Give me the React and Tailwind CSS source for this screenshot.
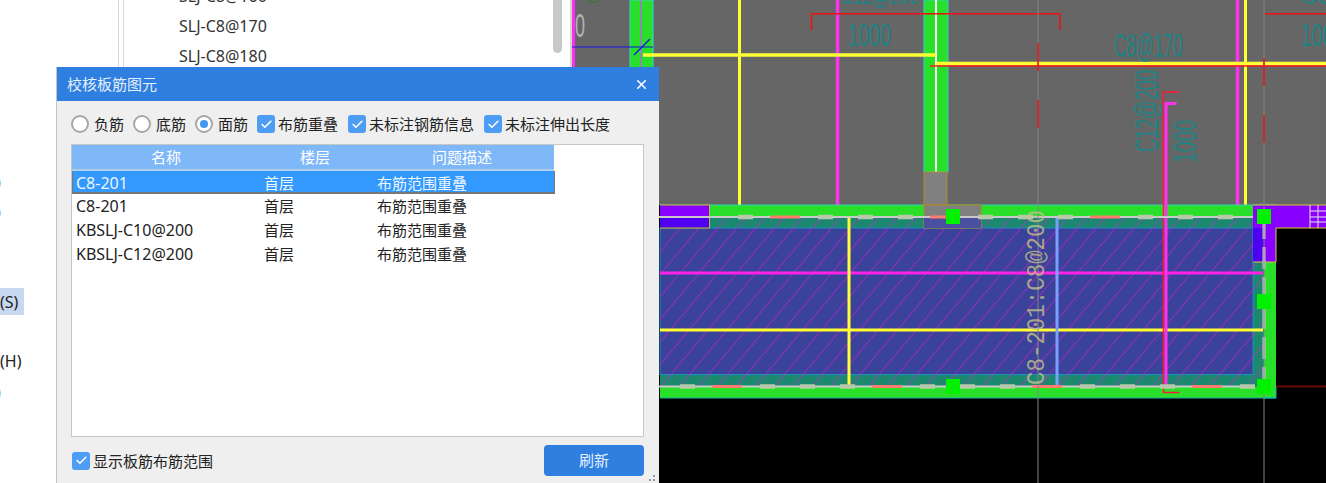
import { X, Check } from 'lucide-react';

const FONT = "font-['Noto_Sans','Noto_Sans_CJK_SC',sans-serif]";

const rows = [
  { name: 'C8-201', floor: '首层', issue: '布筋范围重叠', selected: true },
  { name: 'C8-201', floor: '首层', issue: '布筋范围重叠' },
  { name: 'KBSLJ-C10@200', floor: '首层', issue: '布筋范围重叠' },
  { name: 'KBSLJ-C12@200', floor: '首层', issue: '布筋范围重叠' },
];

const markers = [[953, 216], [1264, 216], [1264, 301], [953, 386], [1264, 386]];

function Radio({ label, checked }) {
  return (
    <label className="flex items-center gap-[5px] text-[15px] leading-[18px] text-[#222]">
      <span className="flex h-[18px] w-[18px] items-center justify-center rounded-full border-2 border-[#a8a8a8] bg-white">
        {checked && <span className="h-[8px] w-[8px] rounded-full bg-[#3f97f5]" />}
      </span>
      <span className="whitespace-nowrap">{label}</span>
    </label>
  );
}

function Checkbox({ label }) {
  return (
    <label className="flex items-center gap-[3px] text-[15px] leading-[18px] text-[#222]">
      <span className="flex h-[18px] w-[18px] items-center justify-center rounded-[3px] bg-[#4d9df5]">
        <Check size={13} strokeWidth={3} className="text-white" />
      </span>
      <span className="whitespace-nowrap">{label}</span>
    </label>
  );
}

function DashedLine({ y, from, to }) {
  const xs = [];
  for (let x = from; x < to; x += 40) xs.push(x);
  return (
    <g>
      <line x1={from - 80} y1={y} x2={to} y2={y} stroke="#c9c9c9" strokeWidth="2" />
      {xs.map((x, i) =>
        i % 4 === 1 ? (
          <line key={x} x1={x - 8} y1={y} x2={x + 22} y2={y} stroke="#ff7b6e" strokeWidth="3" />
        ) : (
          <line key={x} x1={x} y1={y} x2={x + 15} y2={y} stroke="#b9c8aa" strokeWidth="4.5" />
        )
      )}
    </g>
  );
}

function CadText({ x, y, len, h, rotate, mono, fill = '#0b8a8c', children }) {
  // 文字拉成 CAD 的细长字形
  const sy = h / 14;
  const tf = rotate
    ? `translate(${x} ${y}) rotate(-90) scale(1 ${sy})`
    : `translate(${x} ${y}) scale(1 ${sy})`;
  return (
    <text
      transform={tf}
      textLength={len}
      lengthAdjust="spacingAndGlyphs"
      fontFamily={mono ? 'Liberation Mono, monospace' : 'Liberation Sans, sans-serif'}
      fontSize="19"
      fill={fill}
      fillOpacity="0.8"
    >
      {children}
    </text>
  );
}

function CadView() {
  return (
    <svg className="block h-[483px] w-[756px]" viewBox="570 0 756 483">
      <defs>
        <pattern id="hatch" width="14.5" height="14.5" patternUnits="userSpaceOnUse" patternTransform="rotate(40)">
          <line x1="0" y1="0" x2="0" y2="14.5" stroke="#d41cdc" strokeWidth="1.2" />
        </pattern>
      </defs>
      <rect x="570" y="0" width="756" height="483" fill="#000" />
      <rect x="572" y="0" width="754" height="205" fill="#666" />
      <rect x="566" y="0" width="6" height="70" fill="#d4d4d4" />
      <rect x="572" y="0" width="3" height="70" fill="#ff2ff0" />

      {/* 上部墙 */}
      <rect x="630" y="0" width="23" height="70" fill="#2adf2a" stroke="#28e0d0" />
      <rect x="924" y="0" width="24" height="172" fill="#2adf2a" stroke="#28d8d0" />
      <line x1="936" y1="0" x2="936" y2="172" stroke="#f4fff4" strokeWidth="2" />
      <line x1="641" y1="0" x2="641" y2="70" stroke="#8a8ab0" strokeWidth="2" />

      <line x1="739.5" y1="0" x2="739.5" y2="217" stroke="#ffff33" strokeWidth="3" />
      <line x1="837.5" y1="0" x2="837.5" y2="217" stroke="#ff33ee" strokeWidth="3.5" />
      <line x1="1237.5" y1="0" x2="1237.5" y2="217" stroke="#ff33ee" strokeWidth="3.5" />
      <line x1="1245.5" y1="0" x2="1245.5" y2="217" stroke="#ffff33" strokeWidth="3" />
      <line x1="643" y1="55" x2="936" y2="55" stroke="#ffff33" strokeWidth="3.5" />
      <line x1="936" y1="63.5" x2="1326" y2="63.5" stroke="#ffff33" strokeWidth="3.5" />
      <line x1="930" y1="66" x2="1326" y2="66" stroke="#ff1a1a" strokeWidth="1.5" />

      <path d="M585 -2l5 4h6l5-4" fill="none" stroke="#1f7a2a" strokeWidth="1" />
      <line x1="572" y1="47" x2="653" y2="47" stroke="#1414e0" strokeWidth="1.2" />
      <line x1="634" y1="55" x2="650" y2="39" stroke="#1414e0" strokeWidth="1.2" />

      {/* 红色支座线 */}
      <path d="M811.5 30V13.7H1060V30" fill="none" stroke="#f01010" strokeWidth="1.5" />
      <path d="M1265 13.7H1326" fill="none" stroke="#f01010" strokeWidth="1.5" />

      <CadText x={848} y={46} len={43} h={23}>1000</CadText>
      <CadText x={1301} y={46} len={43} h={23}>1000</CadText>
      <CadText x={1114} y={57} len={69} h={24}>C8@170</CadText>
      <CadText x={840} y={4} len={79} h={20}>C12@200</CadText>
      <CadText x={1301} y={4} len={30} h={20}>C8</CadText>
      <CadText x={1158} y={152} len={82} h={24} rotate>C12@200</CadText>
      <CadText x={1196} y={163} len={43} h={23} rotate>1000</CadText>
      <CadText x={575} y={37} len={10} h={24} fill="#c8c8c8">0</CadText>

      {/* 板底部 */}
      <rect x="660" y="205" width="616" height="193" fill="#2adf2a" />
      <rect x="660" y="217" width="604" height="170" fill="#1d8870" />
      <rect x="660" y="228" width="593" height="146.5" fill="#3a4299" stroke="#1a8fc0" />
      <rect x="660" y="217" width="604" height="170" fill="url(#hatch)" />
      <line x1="660" y1="205" x2="1276" y2="205" stroke="#28d8b0" strokeWidth="1" />
      <line x1="660" y1="398" x2="1276" y2="398" stroke="#14b0a0" strokeWidth="1.2" />

      {/* 左侧和右上紫色块 */}
      <rect x="660" y="205" width="49" height="12" fill="#8a00ff" />
      <rect x="660" y="217" width="49" height="11" fill="#5000f0" />
      <path d="M660 205H709.5V228H660" fill="none" stroke="#c8b830" strokeWidth="1" />
      <rect x="1253" y="205" width="73" height="23" fill="#8a00ff" />
      <rect x="1253" y="228" width="23" height="34" fill="#8a00ff" />
      <rect x="1253" y="228" width="11" height="34" fill="#5000f0" />
      <path d="M1253 262H1276V228H1326M1253 205H1326" fill="none" stroke="#d8c830" strokeWidth="1" />
      <path d="M1310 205V228M1318 205V228M1310 211H1326M1310 217H1326M1310 222H1326" stroke="#e8e8e8" strokeWidth="1" />

      {/* 柱头 */}
      <rect x="924" y="172" width="23" height="33" fill="#808080" stroke="#b08a1e" />
      <path d="M924 205H981V228H924Z" fill="#808080" stroke="#b08a1e" />
      <rect x="924" y="217" width="57" height="11" fill="#4a4fa0" />

      {/* 钢筋 */}
      <line x1="660" y1="273" x2="1263" y2="273" stroke="#ff22e8" strokeWidth="3" />
      <line x1="660" y1="330" x2="1263" y2="330" stroke="#ffff33" strokeWidth="3" />
      <line x1="849" y1="217" x2="849" y2="386" stroke="#ffff33" strokeWidth="3" />
      <line x1="1057" y1="217" x2="1057" y2="387" stroke="#7aa0ff" strokeWidth="3" />
      <path d="M1179.5 92H1163.5V392.5H1179.5" fill="none" stroke="#ff1a3a" strokeWidth="1.5" />
      <path d="M1176.5 103.5H1166V386" fill="none" stroke="#ff33ee" strokeWidth="3" />

      <DashedLine y={217} from={738} to={1253} />
      <DashedLine y={386.5} from={680} to={1255} />
      <line x1="660" y1="217" x2="709" y2="217" stroke="#c9c9c9" strokeWidth="2" />
      <line x1="1264" y1="217" x2="1264" y2="386" stroke="#c9c9c9" strokeWidth="3" strokeDasharray="22 8" />

      {/* 轴线 */}
      <line x1="1038" y1="0" x2="1038" y2="483" stroke="#858585" strokeWidth="1" />
      <line x1="1264" y1="0" x2="1264" y2="483" stroke="#858585" strokeWidth="1" />
      <path d="M1038 43V71M1038 100V128M1264 58V86M1264 115V143" stroke="#f01010" strokeWidth="1.5" />
      <line x1="1276" y1="386.5" x2="1326" y2="386.5" stroke="#6a0a0a" strokeWidth="2" />
      <path d="M1264 398H1276V387" fill="none" stroke="#14b0c0" strokeWidth="1" />

      <CadText x={1044} y={385} len={175} h={19} rotate mono fill="#c4c08a">C8-201:C8@200</CadText>

      {markers.map(([x, y]) => (
        <rect key={`${x}-${y}`} x={x - 7} y={y - 7} width="14" height="15" fill="#00f000" />
      ))}
    </svg>
  );
}

function Dialog() {
  return (
    <div className="absolute left-[56px] top-[67px] flex h-[416px] w-[603px] flex-col border-l border-[#c4c4c4] bg-[#efefef]">
      <div className="flex h-[34px] items-center justify-between bg-[#2e7fe0] pl-[10px] pr-[10px] text-[15px] text-[#e6f0fc]">
        <span>校核板筋图元</span>
        <X size={15} strokeWidth={2.5} className="text-white" />
      </div>

      <div className="flex flex-col pl-[14px] pr-[15px] pt-[14px]">
        <div className="flex h-[18px] items-center">
          <div className="flex items-center gap-[9px]">
            <Radio label="负筋" />
            <Radio label="底筋" />
            <Radio label="面筋" checked />
          </div>
          <div className="ml-[9px] flex items-center gap-[10px]">
            <Checkbox label="布筋重叠" />
            <Checkbox label="未标注钢筋信息" />
            <Checkbox label="未标注伸出长度" />
          </div>
        </div>

        <div className="mt-[11px] h-[293px] border border-[#c6c6c6] bg-white text-[15px]">
          <div className="grid h-[26px] w-[482px] grid-cols-[188px_110px_184px] items-center border-b-2 border-[#b4cde8] bg-[#7fb8f8] text-center text-white">
            <span>名称</span>
            <span>楼层</span>
            <span>问题描述</span>
          </div>
          {rows.map((r, i) => (
            <div
              key={i}
              className={
                r.selected
                  ? 'grid h-[23px] w-[483px] grid-cols-[188px_113px_180px] items-center border-x border-b-2 border-[#777] bg-[#3399ff] pl-[3px] text-[#eef6ff]'
                  : 'grid h-[24px] w-[483px] grid-cols-[188px_113px_180px] items-center pl-[4px] text-[#222]'
              }
            >
              <span className="text-[16px]">{r.name}</span>
              <span>{r.floor}</span>
              <span>{r.issue}</span>
            </div>
          ))}
        </div>

        <div className="mt-[8px] flex h-[31px] items-center justify-between">
          <div className="pl-[1px]">
            <Checkbox label="显示板筋布筋范围" />
          </div>
          <button className="h-[31px] w-[100px] rounded-[4px] bg-[#2e7fe0] text-[15px] text-[#e6f0fc]">刷新</button>
        </div>
      </div>

      <svg className="absolute bottom-[1px] right-[3px]" width="8" height="8" viewBox="0 0 8 8">
        <path d="M5 1h2v2H5zM5 5h2v2H5zM1 5h2v2H1z" fill="#9a9a9a" />
      </svg>
    </div>
  );
}

export default function App() {
  return (
    <div className={`relative flex h-[483px] w-[1326px] overflow-hidden bg-white ${FONT}`}>
      {/* 左侧属性栏，只露出一点 */}
      <div className="h-full w-[119px] shrink-0 border-r border-[#d8d8d8] pt-[172px] text-[16px] leading-[20px] text-[#222]">
        <div className="-ml-[4px]">)</div>
        <div className="-ml-[4px] mt-[10px]">)</div>
        <div className="mt-[66px] flex h-[27px] w-[24px] items-center bg-[#c7d9f0]">(S)</div>
        <div className="mt-[36px]">(H)</div>
        <div className="-ml-[4px] mt-[11px]">)</div>
      </div>

      {/* 构件列表 */}
      <div className="relative ml-[4px] h-full w-[447px] shrink-0 border-l border-[#d8d8d8] text-[16px] text-[#333]">
        <div className="-mt-[19px] flex flex-col pl-[55px]">
          <div className="flex h-[30px] items-center">SLJ-C8@160</div>
          <div className="flex h-[30px] items-center">SLJ-C8@170</div>
          <div className="flex h-[30px] items-center">SLJ-C8@180</div>
        </div>
        <div className="absolute left-[429px] top-0 h-[53px] w-[9px] rounded-b-full bg-[#c8c8c8]" />
      </div>

      <div className="shrink-0">
        <CadView />
      </div>

      <Dialog />
    </div>
  );
}
